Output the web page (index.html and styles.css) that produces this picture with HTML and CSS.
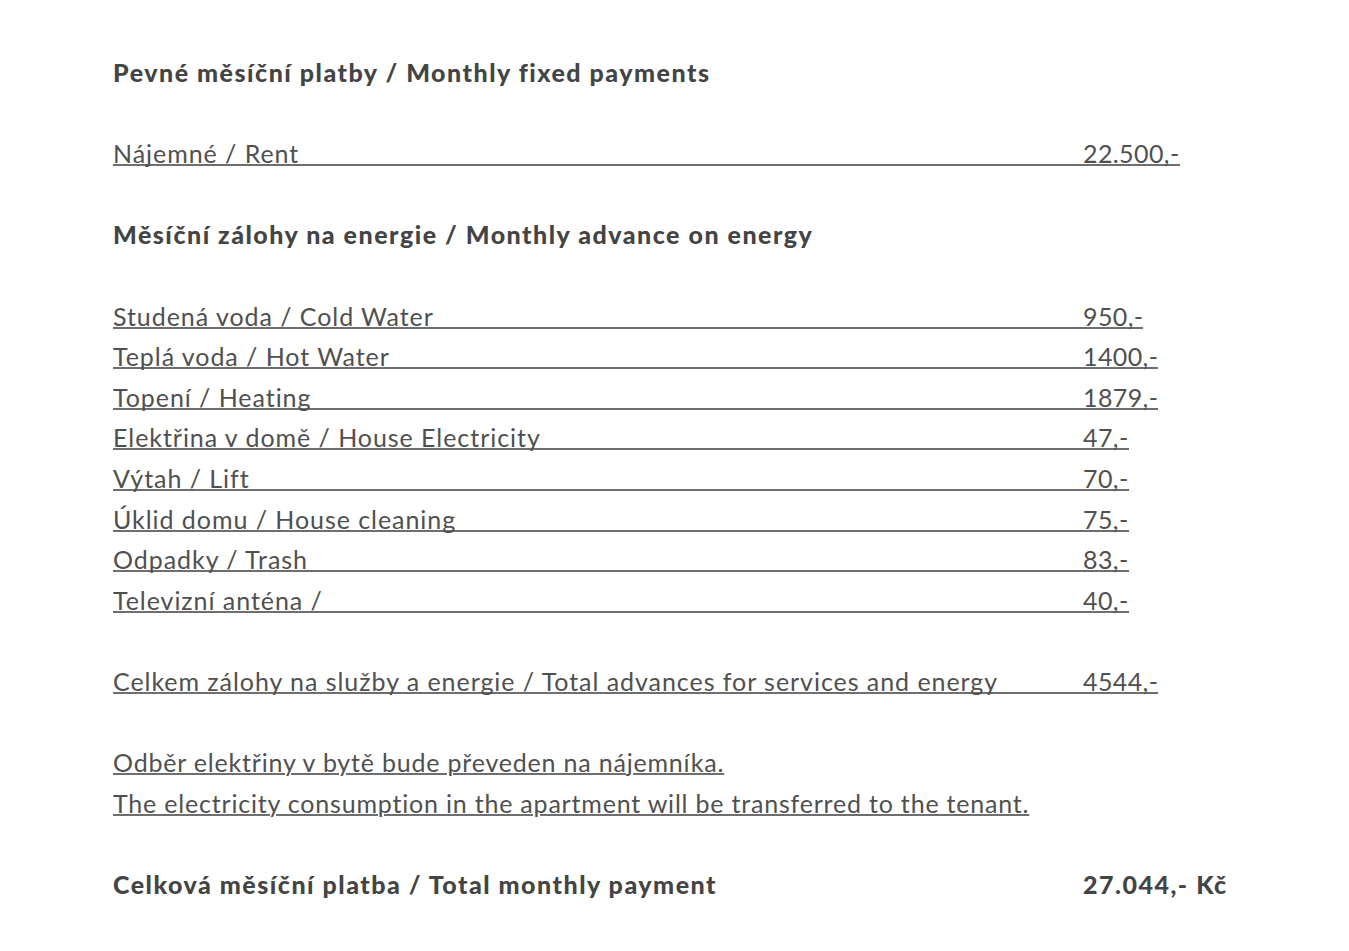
FILE: index.html
```html
<!DOCTYPE html>
<html lang="cs">
<head>
<meta charset="utf-8">
<title>Měsíční platby</title>
<link rel="stylesheet" href="styles.css">
</head>
<body>
<main class="doc">
  <section class="block">
    <h2 class="heading">Pevné měsíční platby / Monthly fixed payments</h2>
  </section>
  <section class="block">
    <div class="line"><span class="ul"><span class="label">Nájemné / Rent</span><span class="amount">22.500,-</span></span></div>
  </section>
  <section class="block">
    <h2 class="heading">Měsíční zálohy na energie / Monthly advance on energy</h2>
  </section>
  <section class="block">
    <div class="line"><span class="ul"><span class="label">Studená voda / Cold Water</span><span class="amount">950,-</span></span></div>
    <div class="line"><span class="ul"><span class="label">Teplá voda / Hot Water</span><span class="amount">1400,-</span></span></div>
    <div class="line"><span class="ul"><span class="label">Topení / Heating</span><span class="amount">1879,-</span></span></div>
    <div class="line"><span class="ul"><span class="label">Elektřina v domě / House Electricity</span><span class="amount">47,-</span></span></div>
    <div class="line"><span class="ul"><span class="label">Výtah / Lift</span><span class="amount">70,-</span></span></div>
    <div class="line"><span class="ul"><span class="label">Úklid domu / House cleaning</span><span class="amount">75,-</span></span></div>
    <div class="line"><span class="ul"><span class="label">Odpadky / Trash</span><span class="amount">83,-</span></span></div>
    <div class="line"><span class="ul"><span class="label">Televizní anténa /</span><span class="amount">40,-</span></span></div>
  </section>
  <section class="block">
    <div class="line"><span class="ul"><span class="label">Celkem zálohy na služby a energie / Total advances for services and energy</span><span class="amount">4544,-</span></span></div>
  </section>
  <section class="block">
    <p class="note"><span class="ul-text">Odběr elektřiny v bytě bude převeden na nájemníka.</span></p>
    <p class="note"><span class="ul-text">The electricity consumption in the apartment will be transferred to the tenant.</span></p>
  </section>
  <section class="block">
    <div class="line heading-line"><span class="label">Celková měsíční platba / Total monthly payment</span><span class="amount">27.044,- Kč</span></div>
  </section>
</main>
</body>
</html>
```
FILE: styles.css
```css
html, body {
  margin: 0;
  padding: 0;
  background: #ffffff;
}

.doc {
  padding: 52px 0 0 113px;
  font-family: Lato, "Open Sans", "Liberation Sans", sans-serif;
  color: #505050;
}

.block {
  margin: 0 0 40.6px 0;
}

.heading {
  margin: 0;
  font-size: 25px;
  font-weight: 900;
  letter-spacing: 1.5px;
  line-height: 40.6px;
  color: #444444;
}

.line {
  display: flex;
  font-size: 25px;
  font-weight: 400;
  letter-spacing: 0.95px;
  line-height: 40.6px;
  white-space: nowrap;
}

.ul {
  display: inline-flex;
  background: linear-gradient(#6e6e6e, #6e6e6e) no-repeat 0 31px / 100% 2px;
}

.label {
  flex: 0 0 970px;
  width: 970px;
}

.amount {
  flex: 0 0 auto;
  letter-spacing: 0.4px;
}

.heading-line {
  font-weight: 900;
  letter-spacing: 1.5px;
  color: #444444;
}

.heading-line .amount {
  letter-spacing: 1.5px;
}

.note {
  margin: 0;
  font-size: 25px;
  letter-spacing: 0.8px;
  line-height: 40.6px;
  white-space: nowrap;
}

.ul-text {
  text-decoration: underline;
  text-decoration-color: #6e6e6e;
  text-decoration-thickness: 2px;
  text-underline-offset: 1px;
}
```
